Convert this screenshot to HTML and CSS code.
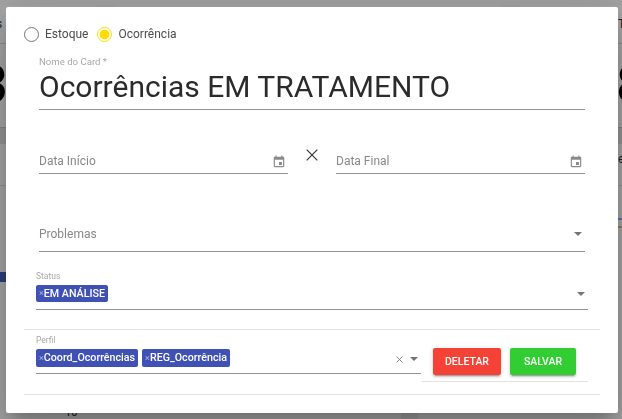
FILE: index.html
```html
<!DOCTYPE html>
<html lang="en">
<head>
    <meta charset="UTF-8">
    <title>Ocorrências EM TRATAMENTO</title>
    <link rel="stylesheet" href="styles.css">
</head>
<body>
    <!-- page behind the dialog, only its edges show -->
    <div class="page">
        <div class="top-row">
            <div class="card card-left"><span class="card-title">Ocorrências</span></div>
            <div class="card card-mid"></div>
            <div class="card card-right"><span class="card-title">TOTAL</span></div>
        </div>
        <div class="big-row">
            <span class="big-num big-left">3</span>
            <span class="big-num big-right">8</span>
        </div>
        <div class="band"></div>
        <div class="list-row">
            <span></span>
            <span class="list-text">es</span>
        </div>
        <div class="chart-row">
            <div class="chart-left"><div class="bar-blue"></div></div>
            <div class="chart-right">
                <div class="line-blue"></div>
                <div class="line-orange"></div>
            </div>
        </div>
        <div class="bottom-row">
            <span class="axis-num">10</span>
            <div class="axis-col"></div>
        </div>
    </div>
    <div class="overlay"></div>

    <div class="modal">
        <div class="radios">
            <label class="radio-item">
                <span class="radio"></span>
                Estoque
            </label>
            <label class="radio-item">
                <span class="radio radio-on"></span>
                Ocorrência
            </label>
        </div>

        <div class="form">
            <div class="field field-name">
                <span class="float-label">Nome do Card *</span>
                <div class="name-value">Ocorrências EM TRATAMENTO</div>
            </div>

            <div class="date-row">
                <div class="field field-date">
                    <span class="placeholder">Data Início</span>
                    <svg class="icon-date" viewBox="0 0 24 24"><path d="M17 12h-5v5h5v-5zM16 1v2H8V1H6v2H5c-1.11 0-1.99.9-1.99 2L3 19c0 1.1.89 2 2 2h14c1.1 0 2-.9 2-2V5c0-1.1-.9-2-2-2h-1V1h-2zm3 18H5V8h14v11z"/></svg>
                </div>
                <svg class="icon-x" viewBox="0 0 12 12"><path d="M.7.7l10.6 10.6M11.3.7L.7 11.3"/></svg>
                <div class="field field-date">
                    <span class="placeholder">Data Final</span>
                    <svg class="icon-date" viewBox="0 0 24 24"><path d="M17 12h-5v5h5v-5zM16 1v2H8V1H6v2H5c-1.11 0-1.99.9-1.99 2L3 19c0 1.1.89 2 2 2h14c1.1 0 2-.9 2-2V5c0-1.1-.9-2-2-2h-1V1h-2zm3 18H5V8h14v11z"/></svg>
                </div>
            </div>

            <div class="field field-problemas">
                <span class="placeholder">Problemas</span>
                <span class="caret"></span>
            </div>
        </div>

        <div class="field field-status">
            <span class="small-label">Status</span>
            <div class="chips">
                <span class="chip"><span class="chip-x">×</span>EM ANÁLISE</span>
            </div>
            <span class="caret"></span>
        </div>

        <div class="divider divider-status"></div>

        <div class="perfil-row">
            <div class="field field-perfil">
                <span class="small-label">Perfil</span>
                <div class="chips">
                    <span class="chip"><span class="chip-x">×</span>Coord_Ocorrências</span>
                    <span class="chip"><span class="chip-x">×</span>REG_Ocorrência</span>
                </div>
                <svg class="icon-clear" viewBox="0 0 8 8"><path d="M.6.6l6.8 6.8M7.4.6L.6 7.4"/></svg>
                <span class="caret"></span>
            </div>
            <div class="actions">
                <button class="btn btn-delete">DELETAR</button>
                <button class="btn btn-save">SALVAR</button>
            </div>
        </div>

        <div class="divider divider-end"></div>
    </div>
</body>
</html>
```

FILE: styles.css
```css
* {
    box-sizing: border-box;
}
html, body {
    margin: 0;
    height: 100%;
}
body {
    font-family: Roboto, "Liberation Sans", sans-serif;
    background-color: #eeeeee;
    overflow: hidden;
}

/* page behind the dialog */
.page {
    display: flex;
    flex-direction: column;
    height: 419px;
    overflow: hidden;
}
.top-row {
    display: flex;
    gap: 18px;
    height: 44px;
    padding-top: 5px;
    border-bottom: 1px solid #cfcfcf;
}
.card {
    flex: 1;
    background-color: #f4f4f4;
    font-size: 12px;
    color: #333;
    padding-top: 12px;
    white-space: nowrap;
}
.card-left {
    flex: none;
    width: 97px;
    text-indent: -62px;
}
.card-right {
    flex: none;
    width: 103px;
    padding-left: 99px;
}
.big-row {
    display: flex;
    justify-content: space-between;
    align-items: center;
    height: 84px;
    background-color: #f4f4f4;
}
.big-num {
    font-size: 52px;
    line-height: 52px;
    color: #000;
    width: 30px;
}
.big-left {
    margin-left: -21px;
}
.big-right {
    margin-right: -24px;
}
.band {
    height: 18px;
    background-color: #dcdcdc;
    border-top: 1px solid #c4c4c4;
}
.list-row {
    display: flex;
    justify-content: space-between;
    height: 42px;
    background-color: #f4f4f4;
    border-bottom: 1px solid #d8d8d8;
    font-size: 12px;
    color: #333;
    padding-top: 8px;
}
.list-text {
    margin-right: -9px;
    width: 13px;
}
.chart-row {
    display: flex;
    justify-content: space-between;
    height: 226px;
    background-color: #f4f4f4;
}
.chart-left {
    padding-top: 86px;
    width: 6px;
}
.bar-blue {
    height: 10px;
    background-color: #3f5fb5;
}
.chart-right {
    width: 4px;
    padding-top: 32px;
}
.line-blue {
    height: 2px;
    background-color: #8fa6e8;
    margin-bottom: 6px;
}
.line-orange {
    height: 2px;
    background-color: #f0b48a;
}
.bottom-row {
    height: 10px;
    position: relative;
    background-color: #f4f4f4;
    font-size: 11px;
    color: #222;
}
.axis-num {
    position: absolute;
    left: 65px;
    top: -3px;
}
.axis-col {
    position: absolute;
    left: 401px;
    top: -6px;
    width: 17px;
    height: 16px;
    background-color: #e6e6e6;
}
.overlay {
    position: fixed;
    inset: 0;
    background-color: rgba(0,0,0,0.32);
}

/* dialog */
.modal {
    position: fixed;
    left: 6px;
    top: 7px;
    width: 612px;
    height: 406px;
    padding: 19px 18px 0;
    background-color: white;
    border-radius: 2px;
    box-shadow: 0 11px 15px -7px rgba(0,0,0,0.2), 0 24px 38px 3px rgba(0,0,0,0.14), 0 9px 46px 8px rgba(0,0,0,0.12);
}
.radios {
    display: flex;
    gap: 9px;
    height: 16px;
}
.radio-item {
    display: flex;
    align-items: center;
    gap: 6px;
    font-size: 12px;
    color: #4d4d4d;
}
.radio {
    width: 15px;
    height: 15px;
    border: 1px solid #757575;
    border-radius: 50%;
}
.radio-on {
    border-color: #ffdd00;
    background: radial-gradient(circle, #ffdd00 0, #ffdd00 4.5px, white 5.2px);
}
.form {
    padding: 0 15px;
}
.field {
    position: relative;
    border-bottom: 1px solid #949494;
}
.float-label, .small-label {
    display: block;
    color: #a8a8a8;
}
.float-label {
    font-size: 9.6px;
    line-height: 12px;
    padding-top: 1px;
}
.field-name {
    height: 55px;
    margin-top: 13px;
}
.name-value {
    font-size: 30px;
    line-height: 36px;
    color: #2b2b2b;
    margin-top: 1px;
}
.date-row {
    display: flex;
    justify-content: space-between;
    margin-top: 30px;
}
.field-date {
    width: 249px;
    height: 34px;
    padding-top: 10px;
}
.placeholder {
    font-size: 12px;
    line-height: 14px;
    color: #888888;
}
.icon-date {
    position: absolute;
    right: 2px;
    top: 15px;
    width: 14px;
    height: 14px;
    fill: #8a8a8a;
}
.icon-x {
    width: 12px;
    height: 12px;
    margin-top: 9px;
    fill: none;
    stroke: #333;
    stroke-width: 1.2;
}
.field-problemas {
    height: 38px;
    margin-top: 40px;
    padding-top: 9px;
}
.caret {
    position: absolute;
    right: 3px;
    width: 0;
    height: 0;
    border-left: 4px solid transparent;
    border-right: 4px solid transparent;
    border-top: 4px solid #757575;
}
.field-problemas .caret {
    top: 18px;
}
.small-label {
    font-size: 8.5px;
    line-height: 11px;
}
.field-status {
    height: 40px;
    margin: 18px 12px 0;
    padding-top: 1px;
}
.field-status .caret {
    top: 22px;
}
.field-status .chip {
    height: 17px;
}
.chips {
    display: flex;
    gap: 4px;
    margin-top: 3px;
}
.chip {
    display: flex;
    align-items: center;
    height: 18px;
    padding: 0 3px 1px;
    background-color: #3f51b5;
    border-radius: 2px;
    color: white;
    font-size: 10.7px;
    font-weight: 500;
    white-space: nowrap;
}
.chip-x {
    color: rgba(255,255,255,0.55);
    font-size: 9px;
    font-weight: 400;
}
.divider {
    height: 1px;
    background-color: #e2e2e2;
}
.divider-status {
    margin-top: 19px;
}
.perfil-row {
    display: flex;
    height: 64px;
    padding-left: 12px;
}
.field-perfil {
    width: 385px;
    height: 41px;
    margin-top: 3px;
    padding-top: 2px;
}
.field-perfil .caret {
    top: 24px;
}
.icon-clear {
    position: absolute;
    right: 18px;
    top: 23px;
    width: 7px;
    height: 7px;
    fill: none;
    stroke: #777;
    stroke-width: 1;
}
.actions {
    display: flex;
    gap: 9px;
    width: 167px;
    height: 52px;
    padding: 18px 0 0 12px;
    border-bottom: 1px solid #e2e2e2;
}
.btn {
    height: 27px;
    padding: 0;
    border: none;
    border-radius: 2px;
    color: white;
    font-family: inherit;
    font-size: 10.5px;
    font-weight: 500;
    box-shadow: 0 2px 2px rgba(0,0,0,0.14), 0 3px 1px -2px rgba(0,0,0,0.2), 0 1px 5px rgba(0,0,0,0.12);
}
.btn-delete {
    width: 68px;
    background-color: #f44336;
}
.btn-save {
    width: 66px;
    background-color: #32cd32;
}
```
